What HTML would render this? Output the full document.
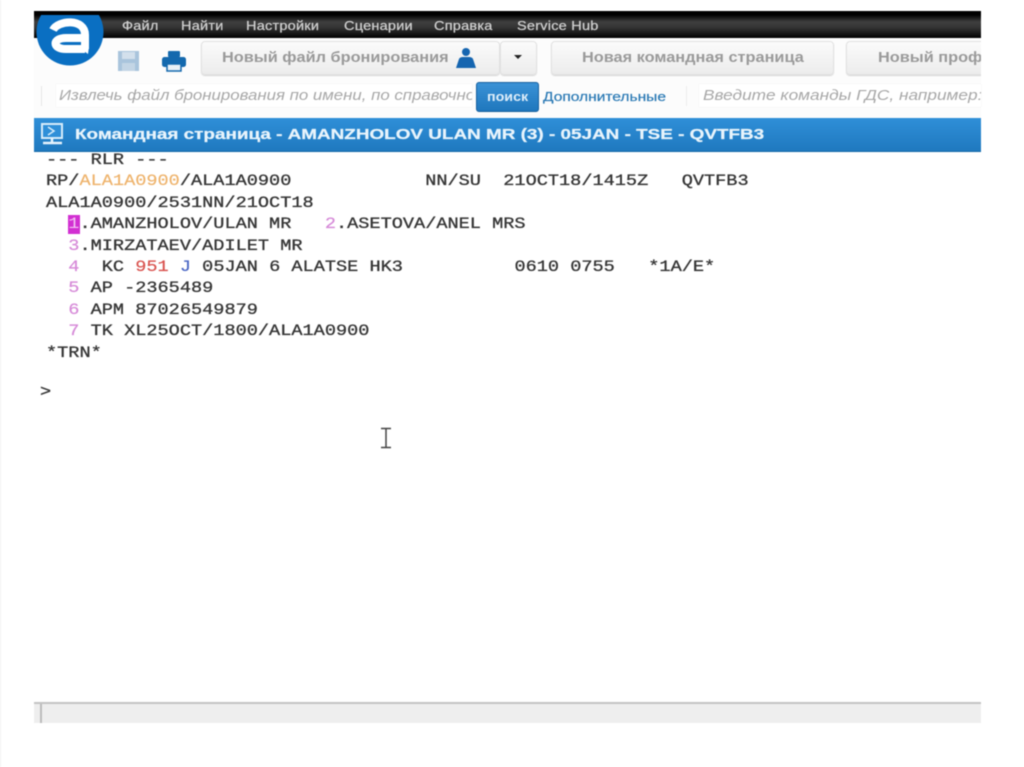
<!DOCTYPE html>
<html lang="ru">
<head>
<meta charset="utf-8">
<title>Командная страница</title>
<style>
html,body{margin:0;padding:0;width:1024px;height:767px;background:#fff;overflow:hidden}
#p{position:absolute;left:0;top:0;width:1024px;height:767px;overflow:hidden;filter:blur(.55px);font-family:"Liberation Sans",sans-serif}
.a{position:absolute;white-space:pre}
.menu{top:18px;font-size:12.5px;line-height:16px;color:#cfcfcf;letter-spacing:.2px;transform:scaleX(1.16);transform-origin:0 0;-webkit-text-stroke:.25px #cfcfcf}
.btn{position:absolute;top:41px;height:34px;box-sizing:border-box;border:1px solid #e2e2e2;border-radius:4px;background:linear-gradient(#fbfbfb,#ececec);box-shadow:0 1px 1px #d5d5d5}
.bt{top:49px;font-size:14.5px;line-height:18px;font-weight:700;color:#9a9a9a;transform:scaleX(1.125);transform-origin:0 0}
.inp{position:absolute;top:84px;height:23px;background:#fff;box-shadow:0 0 1px #e5e5e5}
.clip{position:absolute;overflow:hidden;white-space:pre}
.ph{display:block;font-size:14.5px;line-height:18px;font-style:italic;color:#a8a8a8;transform-origin:0 0}
.m{position:absolute;left:46px;font-family:"Liberation Mono",monospace;font-size:16px;line-height:20px;color:#333;white-space:pre;transform:scaleX(1.1615);transform-origin:0 0;-webkit-text-stroke:.35px #444}
.pk{color:#d68ad8;-webkit-text-stroke:.2px #d68ad8}.o{color:#eeb36c;-webkit-text-stroke:.2px #eeb36c}.r{color:#d9534f;-webkit-text-stroke:.2px #d9534f}.b{color:#4a66c4;-webkit-text-stroke:.2px #4a66c4}
</style>
</head>
<body>
<div id="p">
<div class="a" style="left:0;top:0;width:1px;height:767px;background:#f2f2f2"></div>
<div class="a" style="left:34px;top:11px;width:947px;height:27px;background:linear-gradient(#000 0,#000 14%,#3f3f3f 40%,#333 62%,#000 100%)"></div>
<div class="a" style="left:34px;top:38px;width:947px;height:80px;background:#fcfcfc"></div>

<div class="a menu" style="left:122px">Файл</div>
<div class="a menu" style="left:181px">Найти</div>
<div class="a menu" style="left:246px">Настройки</div>
<div class="a menu" style="left:344px">Сценарии</div>
<div class="a menu" style="left:434px">Справка</div>
<div class="a menu" style="left:517px">Service Hub</div>

<svg class="a" style="left:34px;top:11px" width="74" height="58" viewBox="0 0 74 58">
<defs><clipPath id="c"><rect x="0" y="4" width="74" height="54"/></clipPath></defs>
<g clip-path="url(#c)">
<circle cx="36" cy="21" r="33.5" fill="#0a6fc2"/>
<path d="M19 19 C24 9 51 7 51 24 L51 38" fill="none" stroke="#fff" stroke-width="8"/>
<path d="M51 27 L32 27 C18 27 18 38 32 38 L51 38" fill="none" stroke="#fff" stroke-width="8"/>
<path d="M47 38 L55 36 L54 43 Z" fill="#fff"/>
</g>
</svg>

<svg class="a" style="left:117px;top:50px" width="24" height="22" viewBox="0 0 24 22">
<path d="M1 1H22V21H1Z" fill="#a9c4dc"/>
<rect x="5" y="2" width="13" height="7" fill="#d3e0ec"/>
<rect x="5" y="13" width="13" height="8" fill="#c3d5e5"/>
</svg>
<svg class="a" style="left:162px;top:50px" width="24" height="22" viewBox="0 0 24 22">
<rect x="6" y="1" width="12" height="6" rx="1" fill="#1469ae"/>
<rect x="0" y="7" width="24" height="10" rx="2.5" fill="#1469ae"/>
<rect x="5" y="14" width="14" height="7" fill="#eaf1f7" stroke="#1469ae" stroke-width="1.5"/>
</svg>

<div class="btn" style="left:201px;width:299px"></div>
<div class="btn" style="left:500px;width:37px"></div>
<div class="btn" style="left:551px;width:283px"></div>
<div class="btn" style="left:846px;width:145px;border-right:0"></div>
<div class="a bt" style="left:222px">Новый файл бронирования</div>
<svg class="a" style="left:455px;top:47px" width="22" height="22" viewBox="0 0 22 22">
<circle cx="11" cy="5" r="4" fill="#1565b0"/>
<path d="M1 21 L4 12 Q5 10 8 10 H14 Q17 10 18 12 L21 21Z" fill="#1565b0"/>
</svg>
<svg class="a" style="left:513px;top:54px" width="10" height="6"><path d="M1 1H9L5 5Z" fill="#222"/></svg>
<div class="a bt" style="left:582px">Новая командная страница</div>
<div class="a bt" style="left:878px">Новый профиль</div>
<div class="a" style="left:981px;top:38px;width:43px;height:80px;background:#fff"></div>

<div class="a" style="left:41px;top:86px;width:1px;height:20px;background:#e6e6e6"></div>
<div class="inp" style="left:56px;width:416px"></div>
<div class="clip" style="left:59px;top:87px;width:413px;height:20px"><span class="ph" style="transform:scaleX(1.16)">Извлечь файл бронирования по имени, по справочному</span></div>
<div class="a" style="left:476px;top:82px;width:63px;height:30px;box-sizing:border-box;border:1px solid #17609f;border-radius:3px;background:linear-gradient(#3a92d6,#1f77bd)"></div>
<div class="a" style="left:487px;top:89px;color:#dfeefa;font-size:12.5px;font-weight:700;line-height:16px;transform:scaleX(1.14);transform-origin:0 0">поиск</div>
<div class="a" style="left:543px;top:88px;font-size:13px;line-height:17px;color:#2a79b4;transform:scaleX(1.195);transform-origin:0 0;-webkit-text-stroke:.2px #2a79b4">Дополнительные</div>
<div class="a" style="left:686px;top:86px;width:1px;height:20px;background:#ececec"></div>
<div class="inp" style="left:699px;width:282px"></div>
<div class="clip" style="left:703px;top:87px;width:278px;height:20px"><span class="ph" style="transform:scaleX(1.19)">Введите команды ГДС, например: AN</span></div>

<div class="a" style="left:34px;top:118px;width:947px;height:34px;background:linear-gradient(#2f8fd8,#1f79bf);border-bottom:1px solid #166aa8;box-sizing:border-box"></div>
<svg class="a" style="left:40px;top:122px" width="25" height="24" viewBox="0 0 25 24">
<rect x="2" y="2" width="20" height="14" fill="#2f8fd8" stroke="#d7ecfa" stroke-width="2"/>
<path d="M8 5L14 9L8 13" fill="none" stroke="#d7ecfa" stroke-width="1.5"/>
<path d="M12 16V20M3 21H22" stroke="#e6f3fc" stroke-width="2.5"/>
</svg>
<div class="a" style="left:75px;top:126px;font-size:14.5px;line-height:18px;font-weight:700;color:#e8f4fc;transform:scaleX(1.303);transform-origin:0 0;-webkit-text-stroke:.25px #e8f4fc">Командная страница - AMANZHOLOV ULAN MR (3) - 05JAN - TSE - QVTFB3</div>

<div class="m" style="top:150px">--- RLR ---</div>
<div class="m" style="top:171px">RP/<span class="o">ALA1A0900</span>/ALA1A0900            NN/SU  21OCT18/1415Z   QVTFB3</div>
<div class="m" style="top:193px">ALA1A0900/2531NN/21OCT18</div>
<div class="a" style="left:68px;top:215px;width:12px;height:19px;background:#d22fd2"></div>
<div class="m" style="top:214px">  <span style="color:#f3c4f3;-webkit-text-stroke:0">1</span>.AMANZHOLOV/ULAN MR   <span class="pk">2</span>.ASETOVA/ANEL MRS</div>
<div class="m" style="top:236px">  <span class="pk">3</span>.MIRZATAEV/ADILET MR</div>
<div class="m" style="top:257px">  <span class="pk">4</span>  KC <span class="r">951</span> <span class="b">J</span> 05JAN 6 ALATSE HK3          0610 0755   *1A/E*</div>
<div class="m" style="top:278px">  <span class="pk">5</span> AP -2365489</div>
<div class="m" style="top:300px">  <span class="pk">6</span> APM 87026549879</div>
<div class="m" style="top:321px">  <span class="pk">7</span> TK XL25OCT/1800/ALA1A0900</div>
<div class="m" style="top:343px">*TRN*</div>
<div class="m" style="top:382px;left:40px">&gt;</div>

<svg class="a" style="left:379px;top:427px" width="14" height="22" viewBox="0 0 14 22">
<path d="M2 1.5H12M7 1.5V20.5M2 20.5H12" fill="none" stroke="#444" stroke-width="1.5"/>
</svg>

<div class="a" style="left:34px;top:702px;width:947px;height:21px;background:#eeeeee;border-top:2px solid #c4c4c4;box-sizing:border-box"></div>
<div class="a" style="left:40px;top:704px;width:2px;height:19px;background:#bbb"></div>
</div>
</body>
</html>
